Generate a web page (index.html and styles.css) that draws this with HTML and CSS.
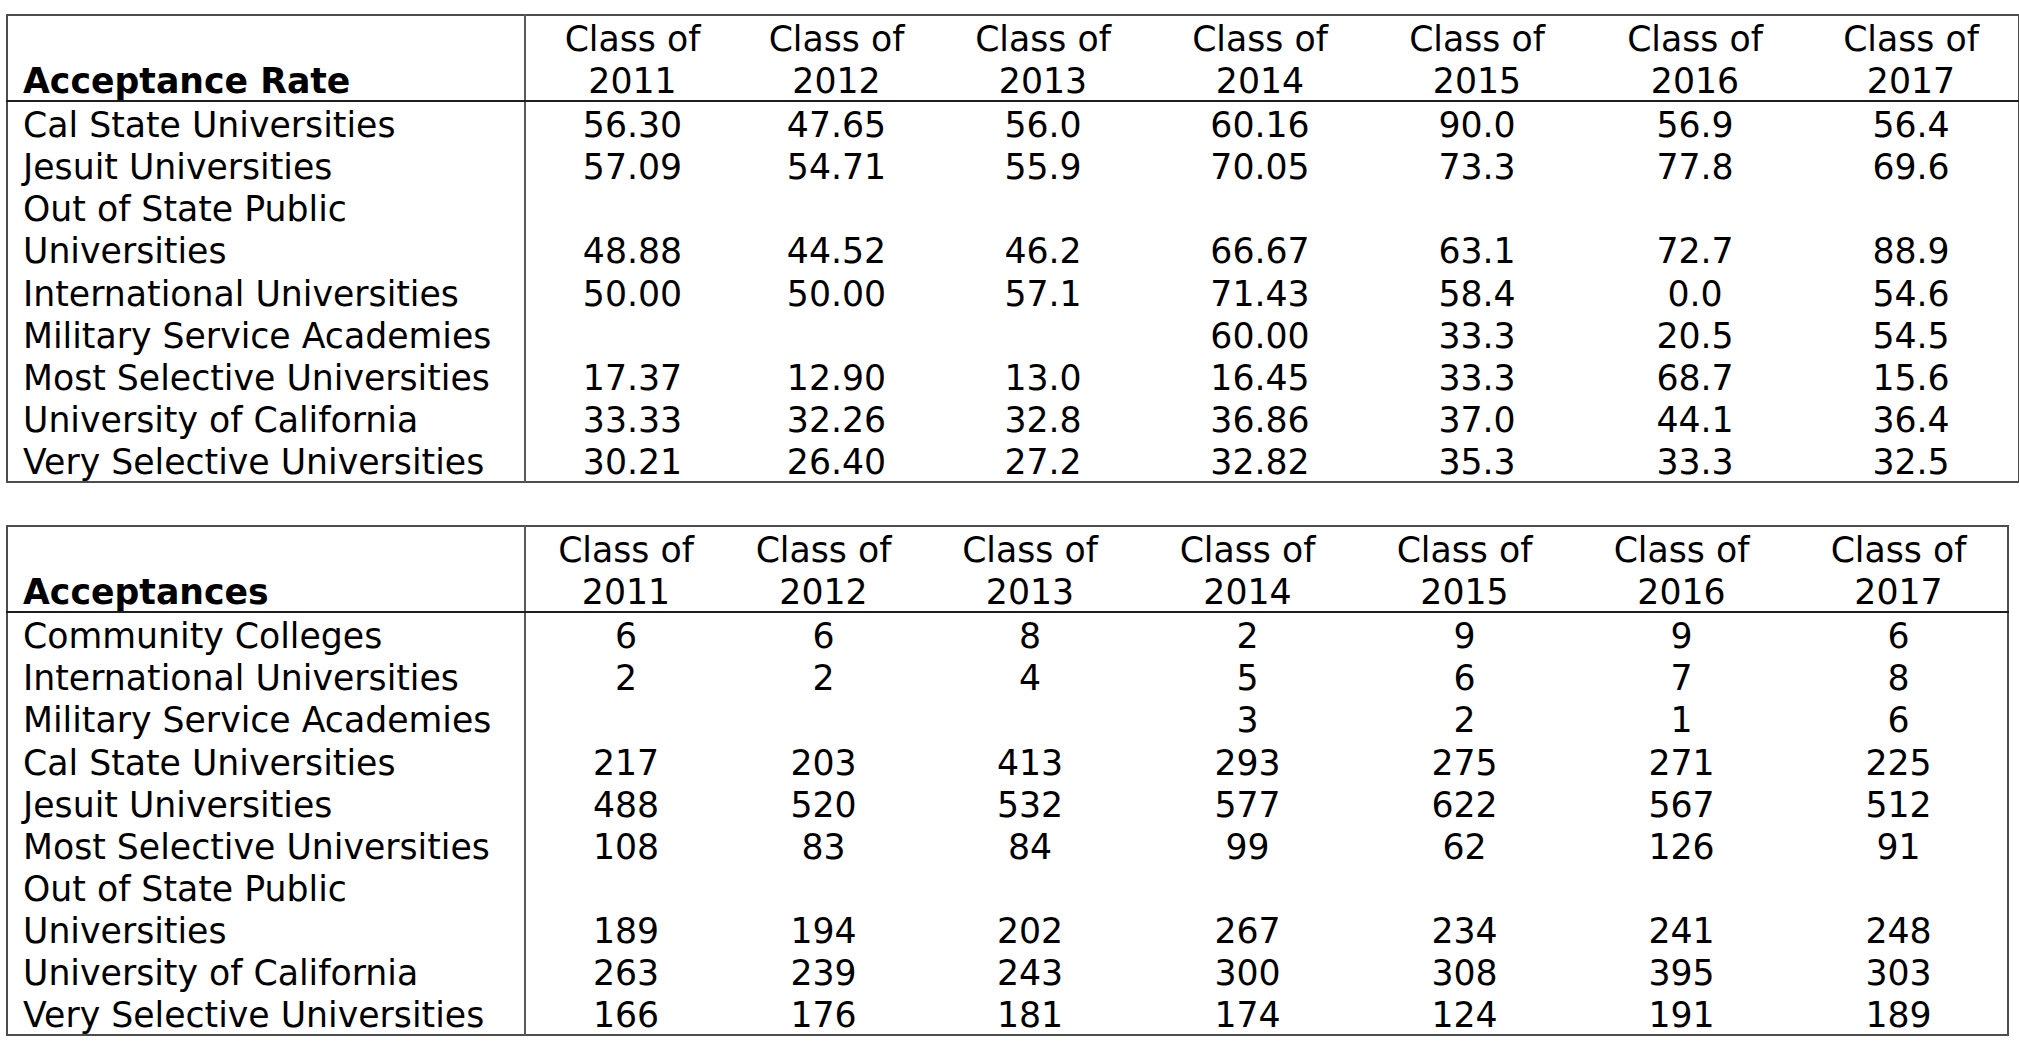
FILE: index.html
```html
<!DOCTYPE html>
<html lang="en">
<head>
<meta charset="utf-8">
<title>Acceptance Rate and Acceptances</title>
<link rel="stylesheet" href="styles.css">
</head>
<body>
<table class="stats stats-rate">
  <colgroup>
    <col class="c-label"><col class="r1"><col class="r2"><col class="r3"><col class="r4"><col class="r5"><col class="r6"><col class="r7">
  </colgroup>
  <thead>
    <tr>
      <th class="label"><span class="t">Acceptance Rate</span></th>
      <th><span class="t">Class of 2011</span></th><th><span class="t">Class of 2012</span></th><th><span class="t">Class of 2013</span></th><th><span class="t">Class of 2014</span></th><th><span class="t">Class of 2015</span></th><th><span class="t">Class of 2016</span></th><th><span class="t">Class of 2017</span></th>
    </tr>
  </thead>
  <tbody>
    <tr><td class="label"><span class="t">Cal State Universities</span></td><td><span class="t">56.30</span></td><td><span class="t">47.65</span></td><td><span class="t">56.0</span></td><td><span class="t">60.16</span></td><td><span class="t">90.0</span></td><td><span class="t">56.9</span></td><td><span class="t">56.4</span></td></tr>
    <tr><td class="label"><span class="t">Jesuit Universities</span></td><td><span class="t">57.09</span></td><td><span class="t">54.71</span></td><td><span class="t">55.9</span></td><td><span class="t">70.05</span></td><td><span class="t">73.3</span></td><td><span class="t">77.8</span></td><td><span class="t">69.6</span></td></tr>
    <tr><td class="label"><span class="t">Out of State Public Universities</span></td><td><span class="t">48.88</span></td><td><span class="t">44.52</span></td><td><span class="t">46.2</span></td><td><span class="t">66.67</span></td><td><span class="t">63.1</span></td><td><span class="t">72.7</span></td><td><span class="t">88.9</span></td></tr>
    <tr><td class="label"><span class="t">International Universities</span></td><td><span class="t">50.00</span></td><td><span class="t">50.00</span></td><td><span class="t">57.1</span></td><td><span class="t">71.43</span></td><td><span class="t">58.4</span></td><td><span class="t">0.0</span></td><td><span class="t">54.6</span></td></tr>
    <tr><td class="label"><span class="t">Military Service Academies</span></td><td></td><td></td><td></td><td><span class="t">60.00</span></td><td><span class="t">33.3</span></td><td><span class="t">20.5</span></td><td><span class="t">54.5</span></td></tr>
    <tr><td class="label"><span class="t">Most Selective Universities</span></td><td><span class="t">17.37</span></td><td><span class="t">12.90</span></td><td><span class="t">13.0</span></td><td><span class="t">16.45</span></td><td><span class="t">33.3</span></td><td><span class="t">68.7</span></td><td><span class="t">15.6</span></td></tr>
    <tr><td class="label"><span class="t">University of California</span></td><td><span class="t">33.33</span></td><td><span class="t">32.26</span></td><td><span class="t">32.8</span></td><td><span class="t">36.86</span></td><td><span class="t">37.0</span></td><td><span class="t">44.1</span></td><td><span class="t">36.4</span></td></tr>
    <tr><td class="label"><span class="t">Very Selective Universities</span></td><td><span class="t">30.21</span></td><td><span class="t">26.40</span></td><td><span class="t">27.2</span></td><td><span class="t">32.82</span></td><td><span class="t">35.3</span></td><td><span class="t">33.3</span></td><td><span class="t">32.5</span></td></tr>
  </tbody>
</table>

<table class="stats stats-count">
  <colgroup>
    <col class="c-label"><col class="a1"><col class="a2"><col class="a3"><col class="a4"><col class="a5"><col class="a6"><col class="a7">
  </colgroup>
  <thead>
    <tr>
      <th class="label"><span class="t">Acceptances</span></th>
      <th><span class="t">Class of 2011</span></th><th><span class="t">Class of 2012</span></th><th><span class="t">Class of 2013</span></th><th><span class="t">Class of 2014</span></th><th><span class="t">Class of 2015</span></th><th><span class="t">Class of 2016</span></th><th><span class="t">Class of 2017</span></th>
    </tr>
  </thead>
  <tbody>
    <tr><td class="label"><span class="t">Community Colleges</span></td><td><span class="t">6</span></td><td><span class="t">6</span></td><td><span class="t">8</span></td><td><span class="t">2</span></td><td><span class="t">9</span></td><td><span class="t">9</span></td><td><span class="t">6</span></td></tr>
    <tr><td class="label"><span class="t">International Universities</span></td><td><span class="t">2</span></td><td><span class="t">2</span></td><td><span class="t">4</span></td><td><span class="t">5</span></td><td><span class="t">6</span></td><td><span class="t">7</span></td><td><span class="t">8</span></td></tr>
    <tr><td class="label"><span class="t">Military Service Academies</span></td><td></td><td></td><td></td><td><span class="t">3</span></td><td><span class="t">2</span></td><td><span class="t">1</span></td><td><span class="t">6</span></td></tr>
    <tr><td class="label"><span class="t">Cal State Universities</span></td><td><span class="t">217</span></td><td><span class="t">203</span></td><td><span class="t">413</span></td><td><span class="t">293</span></td><td><span class="t">275</span></td><td><span class="t">271</span></td><td><span class="t">225</span></td></tr>
    <tr><td class="label"><span class="t">Jesuit Universities</span></td><td><span class="t">488</span></td><td><span class="t">520</span></td><td><span class="t">532</span></td><td><span class="t">577</span></td><td><span class="t">622</span></td><td><span class="t">567</span></td><td><span class="t">512</span></td></tr>
    <tr><td class="label"><span class="t">Most Selective Universities</span></td><td><span class="t">108</span></td><td><span class="t">83</span></td><td><span class="t">84</span></td><td><span class="t">99</span></td><td><span class="t">62</span></td><td><span class="t">126</span></td><td><span class="t">91</span></td></tr>
    <tr><td class="label"><span class="t">Out of State Public Universities</span></td><td><span class="t">189</span></td><td><span class="t">194</span></td><td><span class="t">202</span></td><td><span class="t">267</span></td><td><span class="t">234</span></td><td><span class="t">241</span></td><td><span class="t">248</span></td></tr>
    <tr><td class="label"><span class="t">University of California</span></td><td><span class="t">263</span></td><td><span class="t">239</span></td><td><span class="t">243</span></td><td><span class="t">300</span></td><td><span class="t">308</span></td><td><span class="t">395</span></td><td><span class="t">303</span></td></tr>
    <tr><td class="label"><span class="t">Very Selective Universities</span></td><td><span class="t">166</span></td><td><span class="t">176</span></td><td><span class="t">181</span></td><td><span class="t">174</span></td><td><span class="t">124</span></td><td><span class="t">191</span></td><td><span class="t">189</span></td></tr>
  </tbody>
</table>
</body>
</html>
```

FILE: styles.css
```css
html, body {
  background: #ffffff;
}
body {
  margin: 0;
  padding: 14px 0 0 6px;
  font-family: "DejaVu Sans", Verdana, sans-serif;
  font-size: 34.7px;
  line-height: 42.1px;
  color: #000000;
}
.stats {
  border-collapse: collapse;
  table-layout: fixed;
  border: 2px solid #4d4d4d;
}
.stats-rate {
  width: 2012px;
}
.stats-count {
  width: 2001px;
  margin-top: 42px;
}
.stats th,
.stats td {
  padding: 0;
  font-weight: normal;
  text-align: center;
  vertical-align: bottom;
  white-space: normal;
}
.stats .t {
  vertical-align: -2px;
  line-height: 37px;
}
.stats thead th {
  border-bottom: 2px solid #1e1e1e;
}
.stats .label {
  text-align: left;
  padding-left: 15px;
  border-right: 2px solid #5a5a5a;
}
.stats thead th.label {
  font-weight: bold;
}
.c-label { width: 518px; }
.r1 { width: 214px; }
.r2 { width: 195px; }
.r3 { width: 218px; }
.r4 { width: 216px; }
.r5 { width: 218px; }
.r6 { width: 218px; }
.r7 { width: 215px; }
.a1 { width: 201px; }
.a2 { width: 195px; }
.a3 { width: 218px; }
.a4 { width: 217px; }
.a5 { width: 217px; }
.a6 { width: 217px; }
.a7 { width: 218px; }
```
